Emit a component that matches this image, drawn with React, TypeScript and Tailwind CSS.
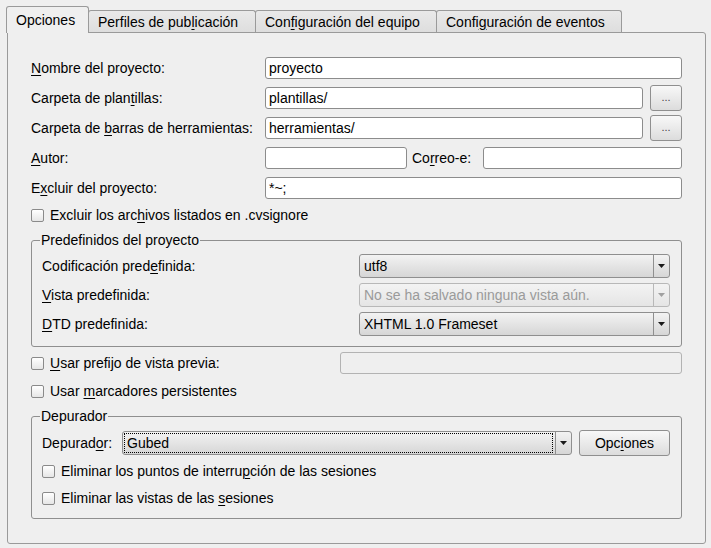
import type { ReactNode } from "react";

function U({ children }: { children: ReactNode }) {
  return <span className="underline decoration-1 underline-offset-[2px]">{children}</span>;
}

function Field({ value = "", className = "", disabled = false }: { value?: string; className?: string; disabled?: boolean }) {
  return (
    <div
      className={`flex h-[22px] items-center rounded-[3px] border px-[3px] ${
        disabled ? "border-[#b3b3b3] bg-[#efefef]" : "border-[#8c8c8c] bg-white"
      } ${className}`}
    >
      {value}
    </div>
  );
}

function Browse() {
  return (
    <div className="flex h-[26px] w-[32px] shrink-0 items-center justify-center rounded-[3px] border border-[#8f8f8f] bg-gradient-to-b from-[#f8f8f8] to-[#dcdcdc] pb-[2px] text-[11px] text-[#444]">
      ...
    </div>
  );
}

function Arrow({ disabled = false }: { disabled?: boolean }) {
  return (
    <svg width="7" height="4" viewBox="0 0 7 4">
      <path d="M0 0h7L3.5 4z" fill={disabled ? "#a0a0a0" : "#1a1a1a"} />
    </svg>
  );
}

function Combo({
  value,
  disabled = false,
  focused = false,
  className = "",
}: {
  value: string;
  disabled?: boolean;
  focused?: boolean;
  className?: string;
}) {
  return (
    <div
      className={`flex h-[24px] rounded-[3px] border ${
        disabled
          ? "border-[#b8b8b8] bg-gradient-to-b from-[#f3f3f3] to-[#e5e5e5] text-[#9a9a9a]"
          : "border-[#8f8f8f] bg-gradient-to-b from-[#f3f3f3] to-[#d6d6d6]"
      } ${className}`}
    >
      <div className="flex min-w-0 flex-1 p-[1px] pr-[2px]">
        <div
          className={`flex flex-1 items-center pl-[2px] ${
            focused ? "border border-dotted border-black" : "border border-transparent"
          }`}
        >
          {value}
        </div>
      </div>
      <div
        className={`flex w-[16px] shrink-0 items-center justify-center border-l ${
          disabled ? "border-[#b8b8b8]" : "border-[#8f8f8f]"
        }`}
      >
        <Arrow disabled={disabled} />
      </div>
    </div>
  );
}

function Check() {
  return (
    <div className="h-[13px] w-[13px] shrink-0 rounded-[2px] border border-[#8a8a8a] bg-gradient-to-b from-white to-[#e6e6e6]" />
  );
}

function Group({ title, children, className = "" }: { title: string; children: ReactNode; className?: string }) {
  return (
    <fieldset className={`rounded-[3px] border border-[#8f8f8f] ${className}`}>
      <legend className="-ml-[2px] px-[1px] leading-[16px]">{title}</legend>
      {children}
    </fieldset>
  );
}

const tabs = [
  { label: <>Perfiles de pub<U>l</U>icación</>, w: "w-[168px]" },
  { label: <>Con<U>f</U>iguración del equipo</>, w: "w-[182px]" },
  { label: <>Confi<U>g</U>uración de eventos</>, w: "w-[186px]" },
];

export default function App() {
  return (
    <div className="h-[548px] w-[711px] overflow-hidden bg-[#efefef] pl-[6px] pt-[6px] font-['Liberation_Sans',Arial,sans-serif] text-[14px] leading-[16px] text-black">
      <div className="flex h-[26px] items-end">
        <div className="relative z-10 -mb-px flex h-[27px] w-[83px] items-center rounded-t-[3px] border border-b-0 border-[#9a9a9a] bg-[#efefef] pb-[1px] pl-[9px]">
          Opciones
        </div>
        {tabs.map((t, i) => (
          <div
            key={i}
            className={`-ml-px flex h-[22px] items-center rounded-t-[3px] border border-b-0 border-[#9a9a9a] bg-gradient-to-b from-[#e9e9e9] to-[#dedede] pl-[9px] ${t.w}`}
          >
            {t.label}
          </div>
        ))}
      </div>

      <div className="ml-px h-[512px] w-[699px] rounded-b-[3px] rounded-tr-[3px] border border-[#9a9a9a] px-[23px] pt-[20px]">
        <div className="flex h-[30px] items-center">
          <div className="w-[234px]">
            <U>N</U>ombre del proyecto:
          </div>
          <Field value="proyecto" className="flex-1" />
        </div>
        <div className="flex h-[30px] items-center">
          <div className="w-[234px]">
            Carpeta de plan<U>t</U>illas:
          </div>
          <Field value="plantillas/" className="flex-1" />
          <div className="ml-[7px]">
            <Browse />
          </div>
        </div>
        <div className="flex h-[30px] items-center">
          <div className="w-[234px]">
            Carpeta de <U>b</U>arras de herramientas:
          </div>
          <Field value="herramientas/" className="flex-1" />
          <div className="ml-[7px]">
            <Browse />
          </div>
        </div>
        <div className="flex h-[30px] items-center">
          <div className="w-[234px]">
            <U>A</U>utor:
          </div>
          <Field className="w-[142px]" />
          <div className="ml-[5px] w-[71px]">
            Co<U>r</U>reo-e:
          </div>
          <Field className="flex-1" />
        </div>
        <div className="flex h-[30px] items-center">
          <div className="w-[234px]">
            E<U>x</U>cluir del proyecto:
          </div>
          <Field value="*~;" className="flex-1" />
        </div>
        <div className="flex h-[24px] items-center gap-[6px]">
          <Check />
          <div>
            Excluir los arc<U>h</U>ivos listados en .cvsignore
          </div>
        </div>

        <Group title="Predefinidos del proyecto" className="mt-[5px] px-[10px] pb-[10px] pr-[11px]">
          <div className="flex flex-col gap-[5px] pt-[6px]">
            <div className="flex items-center">
              <div className="w-[317px]">
                Codificación pred<U>e</U>finida:
              </div>
              <Combo value="utf8" className="flex-1" />
            </div>
            <div className="flex items-center">
              <div className="w-[317px]">
                <U>V</U>ista predefinida:
              </div>
              <Combo value="No se ha salvado ninguna vista aún." disabled className="flex-1" />
            </div>
            <div className="flex items-center">
              <div className="w-[317px]">
                <U>D</U>TD predefinida:
              </div>
              <Combo value="XHTML 1.0 Frameset" className="flex-1" />
            </div>
          </div>
        </Group>

        <div className="mt-px flex h-[30px] items-center gap-[6px]">
          <Check />
          <div>
            <U>U</U>sar prefijo de vista previa:
          </div>
          <Field disabled className="ml-auto w-[342px]" />
        </div>
        <div className="flex h-[26px] items-center gap-[6px]">
          <Check />
          <div>
            Usar <U>m</U>arcadores persistentes
          </div>
        </div>

        <Group title="Depurador" className="mt-[4px] pb-[6px] pl-[10px] pr-[11px]">
          <div className="mt-[6px] flex h-[26px] items-center">
            <div className="w-[80px]">
              Depurad<U>o</U>r:
            </div>
            <Combo value="Gubed" focused className="flex-1" />
            <div className="ml-[7px] flex h-[26px] w-[91px] items-center justify-center rounded-[3px] border border-[#8f8f8f] bg-gradient-to-b from-[#f8f8f8] to-[#dcdcdc]">
              Opc<U>i</U>ones
            </div>
          </div>
          <div className="mt-[2px] flex h-[26px] items-center gap-[6px]">
            <Check />
            <div>
              Eliminar los puntos de interru<U>p</U>ción de las sesiones
            </div>
          </div>
          <div className="flex h-[28px] items-center gap-[6px]">
            <Check />
            <div>
              Eliminar las vistas de las <U>s</U>esiones
            </div>
          </div>
        </Group>
      </div>
    </div>
  );
}
